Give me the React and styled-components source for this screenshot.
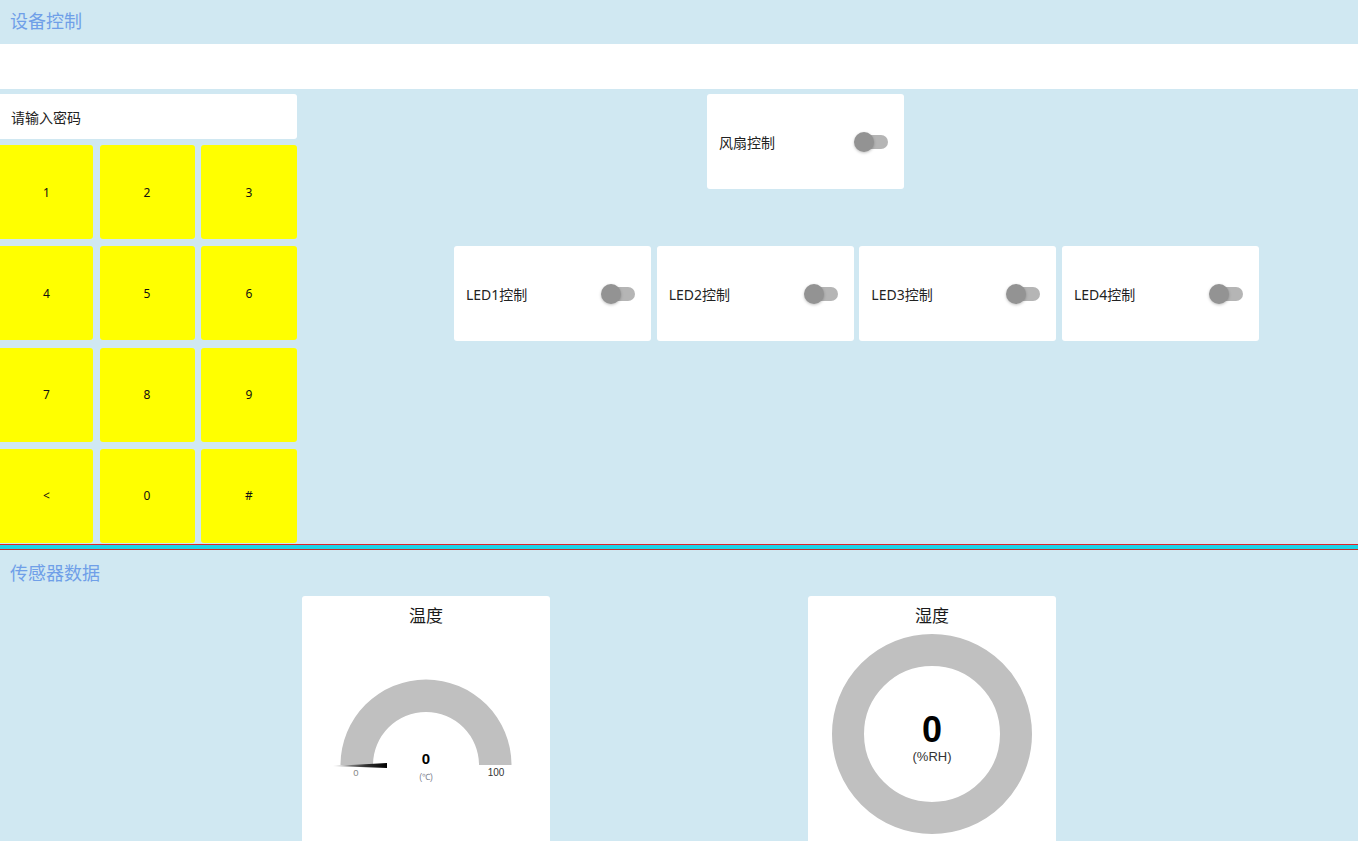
import React from "react";
import styled, { createGlobalStyle } from "styled-components";

const Global = createGlobalStyle`
  html, body { margin: 0; padding: 0; }
  body {
    background: #d0e8f2;
    font-family: "Noto Sans", "Noto Sans CJK SC", sans-serif;
    color: #222;
  }
  * { box-sizing: border-box; }
`;

const Page = styled.div`
  width: 1358px;
  display: flex;
  flex-direction: column;
`;

const SectionTitle = styled.div`
  height: ${(p) => p.$h}px;
  line-height: ${(p) => p.$lh}px;
  padding-left: 10px;
  font-size: 18px;
  color: #6f9fe8;
  font-family: "Noto Sans CJK SC", sans-serif;
`;

const WhiteBar = styled.div`
  height: 45px;
  background: #fff;
`;

const ControlRow = styled.div`
  display: flex;
  margin-top: 5px;
  margin-bottom: 1px;
`;

const LeftCol = styled.div`
  width: 297px;
  display: flex;
  flex-direction: column;
  gap: 6px;
`;

const PwdInput = styled.input`
  height: 45px;
  width: 297px;
  border: none;
  outline: none;
  border-radius: 0 3px 3px 0;
  background: #fff;
  padding: 0 11px;
  font-size: 14px;
  font-family: "Noto Sans CJK SC", sans-serif;
  &::placeholder { color: #222; }
`;

const Keypad = styled.div`
  display: grid;
  grid-template-columns: 93px 95px 96px;
  grid-auto-rows: 94px;
  column-gap: 6.5px;
  row-gap: 7.3px;
`;

const Key = styled.button`
  border: none;
  background: #ffff00;
  border-radius: ${(p) => (p.$first ? "0 3px 3px 0" : "3px")};
  font-size: 12px;
  color: #111;
  font-family: "Noto Sans", sans-serif;
  display: flex;
  align-items: center;
  justify-content: center;
  padding: 0;
`;

const RightCol = styled.div`
  flex: 1;
  display: flex;
  flex-direction: column;
  gap: 57px;
`;

const SwitchRow = styled.div`
  display: flex;
  gap: 5.67px;
  padding-left: ${(p) => p.$pl}px;
`;

const SwitchCard = styled.div`
  width: 197px;
  height: 95px;
  background: #fff;
  border-radius: 3px;
  display: flex;
  align-items: center;
  justify-content: space-between;
  padding: 0 16px 0 12px;
  font-size: 14px;
  font-family: "Noto Sans", "Noto Sans CJK SC", sans-serif;
  color: #222;
`;

const Track = styled.div`
  position: relative;
  width: 33px;
  height: 14px;
  border-radius: 7px;
  background: #b5b5b5;
`;

const Thumb = styled.div`
  position: absolute;
  left: -1px;
  top: -3px;
  width: 20px;
  height: 20px;
  border-radius: 50%;
  background: #939393;
  box-shadow: 0 1px 3px rgba(0, 0, 0, 0.25);
`;

const Separator = styled.div`
  height: 6px;
  border-top: 1px solid #e0242a;
  border-bottom: 1px solid #c0302a;
  background: #1ed2e6;
`;

const SensorGrid = styled.div`
  width: 1012px;
  margin: 0 auto;
  display: grid;
  grid-template-columns: 1fr 1fr;
  justify-items: center;
`;

const SensorCard = styled.div`
  width: 248px;
  height: 300px;
  background: #fff;
  border-radius: 3px;
  display: flex;
  flex-direction: column;
  align-items: center;
`;

const SensorName = styled.div`
  padding-top: 8px;
  height: 34px;
  line-height: 22px;
  font-size: 17px;
  color: #1a1a1a;
  font-family: "Noto Sans CJK SC", sans-serif;
`;

const Gauge = styled.svg`
  display: block;
  font-family: "Liberation Sans", Arial, sans-serif;
`;

function Toggle() {
  return (
    <Track>
      <Thumb />
    </Track>
  );
}

const keys = ["1", "2", "3", "4", "5", "6", "7", "8", "9", "<", "0", "#"];

export default function App() {
  return (
    <Page>
      <Global />
      <SectionTitle $h={44} $lh={40}>设备控制</SectionTitle>
      <WhiteBar />
      <ControlRow>
        <LeftCol>
          <PwdInput placeholder="请输入密码" />
          <Keypad>
            {keys.map((k, i) => (
              <Key key={k} $first={i % 3 === 0}>
                {k}
              </Key>
            ))}
          </Keypad>
        </LeftCol>
        <RightCol>
          <SwitchRow $pl={410}>
            <SwitchCard>
              <span>风扇控制</span>
              <Toggle />
            </SwitchCard>
          </SwitchRow>
          <SwitchRow $pl={157}>
            {["LED1控制", "LED2控制", "LED3控制", "LED4控制"].map((l) => (
              <SwitchCard key={l}>
                <span>{l}</span>
                <Toggle />
              </SwitchCard>
            ))}
          </SwitchRow>
        </RightCol>
      </ControlRow>
      <Separator />
      <SectionTitle $h={46} $lh={44}>传感器数据</SectionTitle>
      <SensorGrid>
        <SensorCard>
          <SensorName>温度</SensorName>
          <Gauge width="248" height="200" viewBox="0 0 248 200">
            <defs>
              <linearGradient id="ndl" x1="0" x2="1" y1="0" y2="0">
                <stop offset="0" stopColor="#cfcfcf" />
                <stop offset="0.6" stopColor="#333" />
                <stop offset="1" stopColor="#000" />
              </linearGradient>
            </defs>
            <path
              d="M 38.5 135 A 85.5 85.5 0 0 1 209.5 135 L 177 135 A 53 53 0 0 0 71 135 Z"
              fill="#c0c0c0"
            />
            <polygon points="31,136 85,133 85,138" fill="url(#ndl)" />
            <text x="124" y="134" textAnchor="middle" fontSize="15" fontWeight="bold" fill="#010101">
              0
            </text>
            <text x="124" y="150" textAnchor="middle" fontSize="8.5" fill="#7a8290">
              (℃)
            </text>
            <text x="54" y="146" textAnchor="middle" fontSize="9.5" fill="#888">
              0
            </text>
            <text x="194" y="146" textAnchor="middle" fontSize="10" fill="#333">
              100
            </text>
          </Gauge>
        </SensorCard>
        <SensorCard>
          <SensorName>湿度</SensorName>
          <Gauge width="248" height="240" viewBox="0 0 248 240">
            <circle cx="124" cy="104" r="84" fill="none" stroke="#c0c0c0" strokeWidth="32" />
            <text x="124" y="112" textAnchor="middle" fontSize="36" fontWeight="bold" fill="#010101">
              0
            </text>
            <text x="124" y="131" textAnchor="middle" fontSize="13" fill="#333">
              (%RH)
            </text>
          </Gauge>
        </SensorCard>
      </SensorGrid>
    </Page>
  );
}
